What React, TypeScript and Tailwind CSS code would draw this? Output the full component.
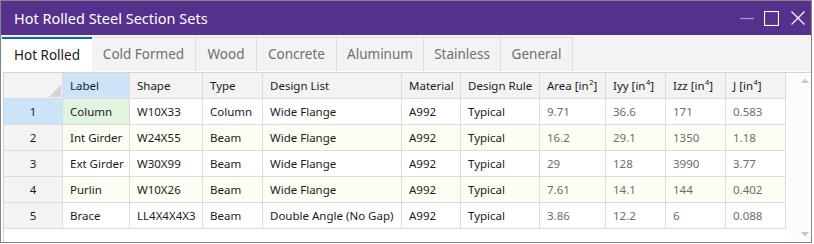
import React from "react";

const cols = [59, 67, 73, 60, 139, 59, 79, 66, 60, 60, 60];

const rows = [
  ["1", "Column", "W10X33", "Column", "Wide Flange", "A992", "Typical", "9.71", "36.6", "171", "0.583"],
  ["2", "Int Girder", "W24X55", "Beam", "Wide Flange", "A992", "Typical", "16.2", "29.1", "1350", "1.18"],
  ["3", "Ext Girder", "W30X99", "Beam", "Wide Flange", "A992", "Typical", "29", "128", "3990", "3.77"],
  ["4", "Purlin", "W10X26", "Beam", "Wide Flange", "A992", "Typical", "7.61", "14.1", "144", "0.402"],
  ["5", "Brace", "LL4X4X4X3", "Beam", "Double Angle (No Gap)", "A992", "Typical", "3.86", "12.2", "6", "0.088"],
];

const tabs = [
  { name: "Hot Rolled", w: 90 },
  { name: "Cold Formed", w: 104 },
  { name: "Wood", w: 61 },
  { name: "Concrete", w: 80 },
  { name: "Aluminum", w: 87 },
  { name: "Stainless", w: 77 },
  { name: "General", w: 72 },
];

function Sup({ n }: { n: string }) {
  return <sup className="text-[7.5px] relative top-[-5px] ml-[0.5px]">{n}</sup>;
}

const headers: React.ReactNode[] = [
  "",
  "Label",
  "Shape",
  "Type",
  "Design List",
  "Material",
  "Design Rule",
  <>Area [in<Sup n="2" />]</>,
  <>Iyy [in<Sup n="4" />]</>,
  <>Izz [in<Sup n="4" />]</>,
  <>J [in<Sup n="4" />]</>,
];

export default function App() {
  const font = { fontFamily: '"Noto Sans", "Open Sans", sans-serif' };
  return (
    <div className="w-[814px] h-[244px] bg-white" style={font}>
      <div className="w-[812px] h-[243px] border border-[#868686] flex flex-col">
        {/* Title bar */}
        <div className="h-[34px] bg-[#55308d] flex items-center pl-[13px] pr-[6px] shrink-0">
          <span className="text-white text-[14.5px] leading-none">Hot Rolled Steel Section Sets</span>
          <div className="ml-auto flex items-center">
            <svg width="14" height="14" viewBox="0 0 14 14" className="mr-[10px]">
              <line x1="0" y1="7.5" x2="14" y2="7.5" stroke="#a899c9" strokeWidth="1.3" />
            </svg>
            <svg width="15" height="15" viewBox="0 0 15 15" className="mr-[12px]">
              <rect x="0.5" y="0.5" width="14" height="14" fill="none" stroke="#ffffff" strokeWidth="1.2" />
            </svg>
            <svg width="14" height="14" viewBox="0 0 14 14">
              <path d="M0.5 0.5 L13.5 13.5 M13.5 0.5 L0.5 13.5" stroke="#ffffff" strokeWidth="1.2" />
            </svg>
          </div>
        </div>
        {/* Tabs */}
        <div className="h-[36px] bg-[#f3f3f3] pt-[2px] pl-[1px] flex shrink-0">
          {tabs.map((t, i) =>
            i === 0 ? (
              <div
                key={t.name}
                className="h-[34px] bg-white border-t-2 border-[#0067c0] flex items-center justify-center text-[13.5px] text-[#1b1b1b]"
                style={{ width: t.w }}
              >
                {t.name}
              </div>
            ) : (
              <div
                key={t.name}
                className="h-[34px] border-t border-r border-[#dcdcdc] flex items-center justify-center text-[13.5px] text-[#6f6f6f]"
                style={{ width: t.w }}
              >
                {t.name}
              </div>
            )
          )}
        </div>
        {/* Content */}
        <div className="flex-1 bg-white pl-[2px] pt-[1px] flex min-h-0">
          <div className="flex-1 border-l border-t border-[#d4d4d4] flex">
            <div
              className="grid content-start text-[11.5px]"
              style={{ gridTemplateColumns: cols.map((c) => c + "px").join(" "), gridAutoRows: "26px" }}
            >
              {headers.map((h, i) => (
                <div
                  key={"h" + i}
                  className={
                    "border-r border-b border-[#dcdcdc] flex items-center text-[#1b1b1b] relative " +
                    (i === 1 ? "bg-[#cce4f7] pl-[7px]" : "bg-[#f3f3f3] pl-[7px]")
                  }
                >
                  {i === 0 ? (
                    <svg width="12" height="12" viewBox="0 0 12 12" className="absolute right-[1px] bottom-[1px]">
                      <path d="M12 0 L12 12 L0 12 Z" fill="#d4d4d4" />
                    </svg>
                  ) : (
                    <span>{h}</span>
                  )}
                </div>
              ))}
              {rows.map((r, ri) =>
                r.map((v, ci) => {
                  const alt = ri % 2 === 1;
                  let bg = alt ? "bg-[#fdfdf3]" : "bg-white";
                  if (ci === 0) bg = ri === 0 ? "bg-[#cce4f7]" : "bg-[#f3f3f3]";
                  if (ci === 1 && ri === 0) bg = "bg-[#e0f4df]";
                  const color = ci >= 7 ? "text-[#6d6d6d]" : "text-[#1b1b1b]";
                  return (
                    <div
                      key={ri + "-" + ci}
                      className={
                        "border-r border-b border-[#dcdcdc] flex items-center whitespace-nowrap overflow-hidden " +
                        bg +
                        " " +
                        color +
                        " " +
                        (ci === 0 ? "justify-center" : "pl-[7px]")
                      }
                    >
                      {v}
                    </div>
                  );
                })
              )}
            </div>
            <div className="flex-1 flex flex-col items-end pr-[2px] bg-[#fcfcfc]">
              <svg width="8" height="6" viewBox="0 0 8 6" className="mt-[5px]">
                <path d="M0 5 L4 0.5 L8 5 Z" fill="#c9c9c9" />
              </svg>
              <svg width="8" height="6" viewBox="0 0 8 6" className="mt-auto mb-[5px]">
                <path d="M0 1 L4 5.5 L8 1 Z" fill="#c9c9c9" />
              </svg>
            </div>
          </div>
        </div>
      </div>
    </div>
  );
}
